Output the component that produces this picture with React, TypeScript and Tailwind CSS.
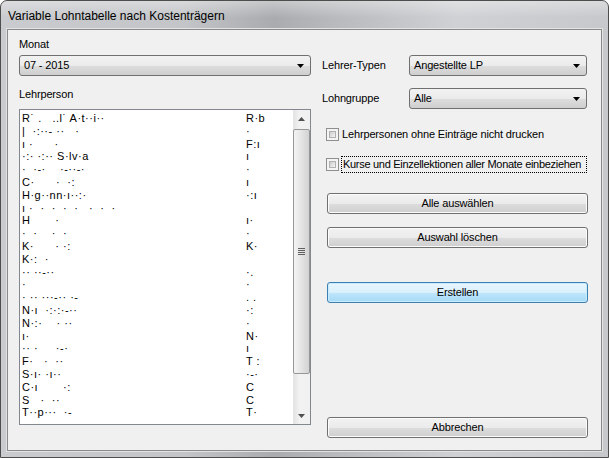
import React from "react";

const rows: [string, string][] = [
  ["R˙ .   ..l˙ A·t··i··", "R·b"],
  ["|  ·:··- ··   ·", "·"],
  ["ı ·      ·", "F:ı"],
  ["·:· ·:·· S·lv·a", "ı"],
  ["·  ·-·    ·-··-·", "·"],
  ["C·      ·  ·:", "ı"],
  ["H·g··nn·ı··:·", "·:ı"],
  ["ı ·  ·  ·  ·  ·   ·  ·  ·", ""],
  ["H       ·", "ı·"],
  ["·  ·    ·  ·", "·"],
  ["K·      · ·:", "K·"],
  ["K·:  ·", ""],
  ["·· ··-··", "·."],
  ["·", "·"],
  ["· ·· ···-·· ·-", ". ."],
  ["N·ı  ·:·:·-··", "·:"],
  ["N·:·    · ··", "·"],
  ["ı·", "N·"],
  ["·· ·     ·-·", "ı"],
  ["F·   ·  ··", "T :"],
  ["S·ı· ·ı··", "·-·"],
  ["C·ı       ·:", "C"],
  ["S   ·  ··", "C"],
  ["T··p···  ·-", "T·"],
];

function Arrow({ up = false, className = "" }: { up?: boolean; className?: string }) {
  return (
    <svg width="7" height="4" viewBox="0 0 7 4" className={className}>
      <path d={up ? "M0 4 L3.5 0 L7 4 Z" : "M0 0 L7 0 L3.5 4 Z"} fill="currentColor" />
    </svg>
  );
}

function Combo({ value, className = "" }: { value: string; className?: string }) {
  return (
    <div
      className={`h-[21px] flex items-center justify-between pl-[4px] pr-[6px] rounded-[3px] border border-[#707070] bg-[linear-gradient(to_bottom,#f2f2f2_0%,#ebebeb_50%,#dddddd_51%,#cfcfcf_100%)] ${className}`}
    >
      <span className="leading-none">{value}</span>
      <Arrow className="text-black w-[7px] h-[4px]" />
    </div>
  );
}

function Btn({ label, primary = false }: { label: string; primary?: boolean }) {
  return (
    <div
      className={`h-[21px] w-[261px] flex items-center justify-center rounded-[3px] border ${
        primary
          ? "border-[#3c7fb1] bg-[linear-gradient(to_bottom,#eaf6fd_0%,#d9f0fc_50%,#bee6fd_51%,#a7d9f5_100%)] shadow-[inset_0_0_0_1px_#c8ecff]"
          : "border-[#707070] bg-[linear-gradient(to_bottom,#f2f2f2_0%,#ebebeb_50%,#dddddd_51%,#cfcfcf_100%)] shadow-[inset_0_0_0_1px_#fcfcfc]"
      }`}
    >
      {label}
    </div>
  );
}

function Check() {
  return (
    <div className="w-[13px] h-[13px] border border-[#8e8f8f] bg-[#f4f4f4] p-[2px] shrink-0">
      <div className="w-full h-full border border-[#b0b0b0] bg-[linear-gradient(135deg,#cbcbcb,#f6f6f6)]" />
    </div>
  );
}

export default function App() {
  return (
    <div className="w-[609px] h-[458px] bg-white text-[11px] tracking-[-0.15px] text-black font-['Liberation_Sans',Arial,sans-serif] select-none">
      <div className="w-full h-full flex flex-col rounded-t-[7px] border border-[#4d4d4d] bg-[linear-gradient(to_right,#c9cbce_0%,#c3c5c8_30%,#a9abae_45%,#b8babd_55%,#cfd1d4_75%,#c6c8cb_100%)] overflow-hidden">
        {/* title bar */}
        <div className="h-[28px] flex items-center pl-[7px] pt-[1px] text-[12px] tracking-normal text-black bg-[linear-gradient(to_bottom,rgba(255,255,255,0.35),rgba(255,255,255,0)_60%)]">
          Variable Lohntabelle nach Kostenträgern
        </div>

        {/* client area */}
        <div className="flex-1 mx-[6px] mb-[6px] border border-[#8a8a8a] shadow-[0_0_0_1px_#e2e2e2] bg-[#f0f0f0] flex">
          {/* left column */}
          <div className="ml-[11px] w-[292px] flex flex-col">
            <div className="mt-[8px] h-[13px] leading-[13px]">Monat</div>
            <Combo value="07 - 2015" className="mt-[4px]" />
            <div className="mt-[12px] h-[13px] leading-[13px]">Lehrperson</div>
            <div className="mt-[8px] h-[316px] border border-[#828790] bg-white flex">
              <div className="flex-1 pt-[2px] pl-[2px] overflow-hidden">
                {rows.map(([a, b], i) => (
                  <div key={i} className="h-[12.8px] leading-[12px] flex whitespace-pre text-[11px] tracking-[0.5px]">
                    <span className="w-[224px] overflow-hidden">{a}</span>
                    <span>{b}</span>
                  </div>
                ))}
              </div>
              {/* scrollbar */}
              <div className="w-[17px] flex flex-col bg-[linear-gradient(to_right,#e3e3e3,#f2f2f2_40%,#f0f0f0)]">
                <div className="h-[17px] flex items-center justify-center text-[#505050]">
                  <Arrow up />
                </div>
                <div className="mt-[2px] h-[245px] rounded-[2px] border border-[#979797] bg-[linear-gradient(to_right,#f3f3f3,#e4e4e4_50%,#d2d2d2)] flex items-center justify-center">
                  <div className="flex flex-col gap-[1px]">
                    <div className="w-[7px] h-[1px] bg-[#606060]" />
                    <div className="w-[7px] h-[1px] bg-[#606060]" />
                    <div className="w-[7px] h-[1px] bg-[#606060]" />
                    <div className="w-[7px] h-[1px] bg-[#606060]" />
                  </div>
                </div>
                <div className="flex-1" />
                <div className="h-[17px] flex items-center justify-center text-[#505050]">
                  <Arrow />
                </div>
              </div>
            </div>
          </div>

          {/* right column */}
          <div className="ml-[11px] w-[266px] flex flex-col">
            <div className="mt-[25px] flex items-center">
              <div className="w-[87px]">Lehrer-Typen</div>
              <Combo value="Angestellte LP" className="w-[178px]" />
            </div>
            <div className="mt-[12px] flex items-center">
              <div className="w-[87px]">Lohngruppe</div>
              <Combo value="Alle" className="w-[178px]" />
            </div>
            <div className="mt-[17px] h-[17px] pl-[4px] flex items-center gap-[3px]">
              <Check />
              <span>Lehrpersonen ohne Einträge nicht drucken</span>
            </div>
            <div className="mt-[13px] h-[17px] pl-[4px] flex items-center gap-[2px]">
              <Check />
              <span className="border border-dotted border-black pl-[1px] h-[17px] leading-[15px] w-[246px] whitespace-nowrap tracking-[-0.3px]">
                Kurse und Einzellektionen aller Monate einbeziehen
              </span>
            </div>
            <div className="mt-[20px] pl-[5px] flex flex-col">
              <Btn label="Alle auswählen" />
              <div className="mt-[13px]">
                <Btn label="Auswahl löschen" />
              </div>
              <div className="mt-[34px]">
                <Btn label="Erstellen" primary />
              </div>
              <div className="mt-[114px]">
                <Btn label="Abbrechen" />
              </div>
            </div>
          </div>
        </div>
      </div>
    </div>
  );
}
